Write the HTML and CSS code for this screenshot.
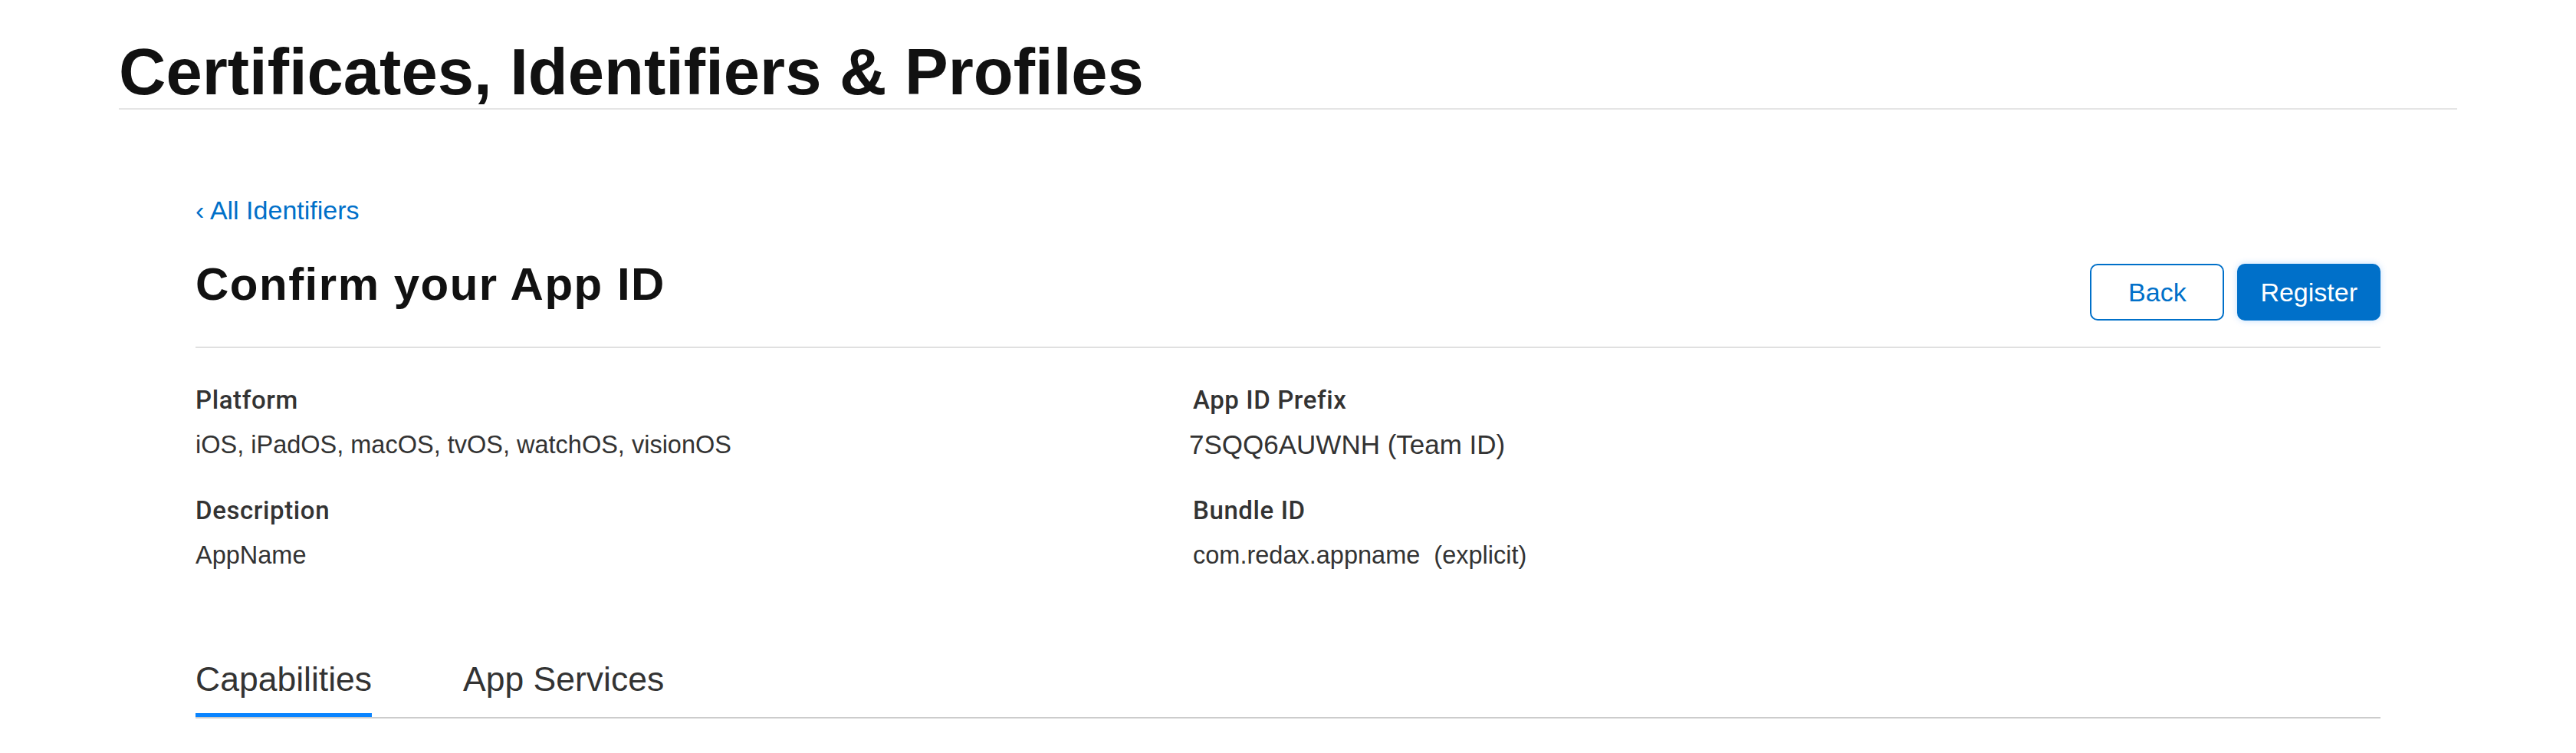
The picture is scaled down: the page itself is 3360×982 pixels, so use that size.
FILE: index.html
```html
<!DOCTYPE html>
<html lang="en">
<head>
<meta charset="UTF-8">
<meta name="viewport" content="width=device-width, initial-scale=1.0">
<title>Confirm your App ID</title>
<link rel="stylesheet" href="styles.css">
</head>
<body>

<div class="page-header">
  <h1>Certificates, Identifiers &amp; Profiles</h1>
</div>

<div class="content">
  <a class="back-link" href="#">&lsaquo; All Identifiers</a>

  <div class="title-row">
    <h2>Confirm your App ID</h2>
    <div class="actions">
      <button class="btn btn-secondary">Back</button>
      <button class="btn btn-primary">Register</button>
    </div>
  </div>

  <div class="details">
    <div class="field">
      <div class="label">Platform</div>
      <div class="value">iOS, iPadOS, macOS, tvOS, watchOS, visionOS</div>
    </div>
    <div class="field">
      <div class="label">App ID Prefix</div>
      <div class="value value-prefix">7SQQ6AUWNH (Team ID)</div>
    </div>
    <div class="field">
      <div class="label">Description</div>
      <div class="value">AppName</div>
    </div>
    <div class="field">
      <div class="label">Bundle ID</div>
      <div class="value">com.redax.appname&nbsp; (explicit)</div>
    </div>
  </div>

  <div class="tabs">
    <a class="tab active" href="#">Capabilities</a>
    <a class="tab" href="#">App Services</a>
  </div>
</div>

</body>
</html>
```

FILE: styles.css
```css
body {
  margin: 0;
  padding: 0;
  font-family: "Liberation Sans", Arial, sans-serif;
  color: #333;
  background-color: #fff;
}

.page-header {
  width: 3050px;
  margin: 0 auto;
  padding-top: 46px;
  border-bottom: 2px solid #e5e5e5;
}

.page-header h1 {
  margin: 0;
  font-size: 85px;
  line-height: 95px;
  font-weight: bold;
  color: #111;
}

.content {
  width: 2850px;
  margin: 0 auto;
}

.back-link {
  display: block;
  margin-top: 111px;
  font-size: 34px;
  line-height: 40px;
  color: #0070c9;
  text-decoration: none;
}

.title-row {
  display: flex;
  justify-content: space-between;
  align-items: flex-start;
  margin-top: 45px;
  padding-bottom: 34px;
  border-bottom: 2px solid #e0e0e0;
}

.title-row h2 {
  margin: 0;
  font-size: 60px;
  line-height: 64px;
  font-weight: bold;
  letter-spacing: 1.5px;
  color: #111;
}

.actions {
  display: flex;
  gap: 17px;
  margin-top: 5px;
}

.btn {
  min-width: 175px;
  height: 74px;
  padding: 0 28px;
  font-family: "Liberation Sans", Arial, sans-serif;
  font-size: 34px;
  border-radius: 10px;
  box-sizing: border-box;
  cursor: pointer;
}

.btn-secondary {
  background-color: #fff;
  color: #0070c9;
  border: 2px solid #0070c9;
}

.btn-primary {
  background-color: #0070c9;
  color: #fff;
  border: 2px solid #0070c9;
  box-shadow: 0 0 8px rgba(0, 125, 250, 0.25);
}

.details {
  display: grid;
  grid-template-columns: 1301px 1fr;
  row-gap: 46px;
  margin-top: 48px;
}

.label {
  font-family: Roboto, "Liberation Sans", sans-serif;
  font-size: 33px;
  line-height: 40px;
  font-weight: 500;
  letter-spacing: 0.6px;
  color: #333;
  margin-bottom: 18px;
}

.value {
  font-size: 32.5px;
  line-height: 40px;
  color: #333;
}

.value-prefix {
  font-size: 35px;
  margin-left: -5px;
}

.tabs {
  display: flex;
  gap: 119px;
  margin-top: 116px;
  border-bottom: 2px solid #ccc;
}

.tab {
  font-size: 44.5px;
  line-height: 52px;
  padding-bottom: 18px;
  border-bottom: 5px solid transparent;
  color: #333;
  text-decoration: none;
}

.tab.active {
  border-bottom-color: #0a84ff;
}
```
